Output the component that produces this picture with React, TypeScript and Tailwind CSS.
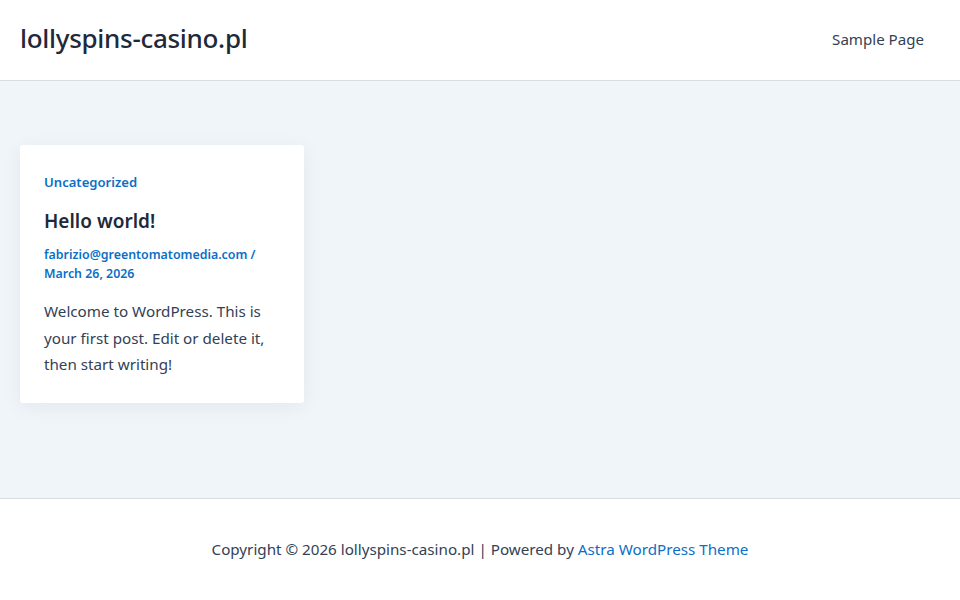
export default function App() {
  return (
    <div className="min-h-[600px] bg-white text-[#334155] font-['Noto_Sans',sans-serif]">
      <header className="h-[81px] flex items-center justify-between px-5 pb-[3px] border-b border-[#d9dce1] bg-white">
        <a className="text-[26px] font-medium text-[#1e293b] tracking-[-0.3px]">lollyspins-casino.pl</a>
        <nav>
          <a className="px-4 text-[15.1px] text-[#334155]">Sample Page</a>
        </nav>
      </header>

      <main className="bg-[#f0f5fa] pt-16 pb-[95px] px-5 border-b border-[#d9dce1]">
        <article className="w-[284px] bg-white rounded-[3px] shadow-[0_4px_20px_rgba(30,41,59,0.06)] px-6 pt-[27px] pb-[25px]">
          <a className="block text-[13.1px] font-semibold text-[#0b6fc6] leading-5">Uncategorized</a>
          <h2 className="mt-[15px] text-[19px] font-semibold text-[#1e293b] leading-7">Hello world!</h2>
          <div className="mt-[10px] text-[12.4px] font-semibold text-[#0b6fc6] leading-[19px]">
            <a>fabrizio@greentomatomedia.com</a> / <br />
            <a>March 26, 2026</a>
          </div>
          <p className="mt-[15px] text-[15.2px] leading-[26.5px]">
            Welcome to WordPress. This is your first post. Edit or delete it, then start writing!
          </p>
        </article>
      </main>

      <footer className="h-[101px] flex items-center justify-center text-[15.2px]">
        <p>
          Copyright © 2026 lollyspins-casino.pl | Powered by{' '}
          <a className="text-[#0b6fc6]">Astra WordPress Theme</a>
        </p>
      </footer>
    </div>
  );
}
